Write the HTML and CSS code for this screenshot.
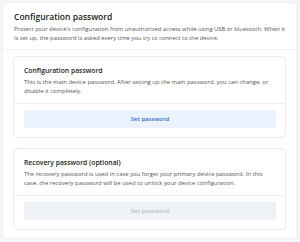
FILE: index.html
```html
<!DOCTYPE html>
<html lang="en">
<head>
    <meta charset="UTF-8">
    <meta name="viewport" content="width=device-width, initial-scale=1.0">
    <title>Configuration password</title>
    <link rel="stylesheet" href="styles.css">
</head>
<body>
    <div class="panel">
        <div class="panel-head">
            <h1>Configuration password</h1>
            <p>Protect your device's configuration from unauthorized access while using USB or bluetooth. When it is set up, the password is asked every time you try to connect to the device.</p>
        </div>

        <div class="panel-body">
            <div class="card">
                <div class="card-head">
                    <h3>Configuration password</h3>
                    <p>This is the main device password. After setting up the main password, you can change, or disable it completely.</p>
                </div>
                <div class="card-foot">
                    <button class="btn">Set password</button>
                </div>
            </div>

            <div class="card">
                <div class="card-head">
                    <h3>Recovery password (optional)</h3>
                    <p>The recovery password is used in case you forget your primary device password. In this case, the recovery password will be used to unlock your device configuration.</p>
                </div>
                <div class="card-foot">
                    <button class="btn" disabled>Set password</button>
                </div>
            </div>
        </div>
    </div>
</body>
</html>
```

FILE: styles.css
```css
body {
    font-family: "Open Sans", Arial, sans-serif;
    margin: 0;
    padding: 3px 4px 4px 3px;
    background-color: #f4f5f7;
}
.panel {
    background-color: white;
    border-radius: 4px;
    box-shadow: 0 0 2px rgba(0,0,0,0.08);
}
.panel-head {
    padding: 7px 11px 6.5px;
    border-bottom: 1px solid #eeeeee;
}
.panel-head h1 {
    margin: 0;
    font-size: 8.5px;
    line-height: 14px;
    font-weight: 600;
    color: #222;
}
.panel-head p {
    margin: 1px 0 0;
    font-size: 5.85px;
    line-height: 8.5px;
    color: #555;
}
.panel-body {
    padding: 6px 10px 8px;
    display: flex;
    flex-direction: column;
    gap: 10px;
}
.card {
    border: 1px solid #ececec;
    border-radius: 4px;
}
.card-head {
    padding: 8.5px 10px 6.5px;
    border-bottom: 1px solid #eeeeee;
}
.card-head h3 {
    margin: 0;
    font-size: 6.8px;
    line-height: 11px;
    font-weight: 600;
    color: #222;
}
.card-head p {
    margin: 2px 0 0;
    font-size: 5.9px;
    line-height: 9px;
    color: #555;
}
.card-foot {
    padding: 6px 9px 9px 10px;
}
.btn {
    display: block;
    width: 100%;
    height: 18px;
    border: none;
    border-radius: 3px;
    background-color: #eaf2fe;
    color: #3a6bc9;
    font-family: inherit;
    font-size: 6px;
    font-weight: 600;
    cursor: pointer;
}
.btn:disabled {
    background-color: #eef1f5;
    color: #b9c0ca;
    cursor: default;
}
```
